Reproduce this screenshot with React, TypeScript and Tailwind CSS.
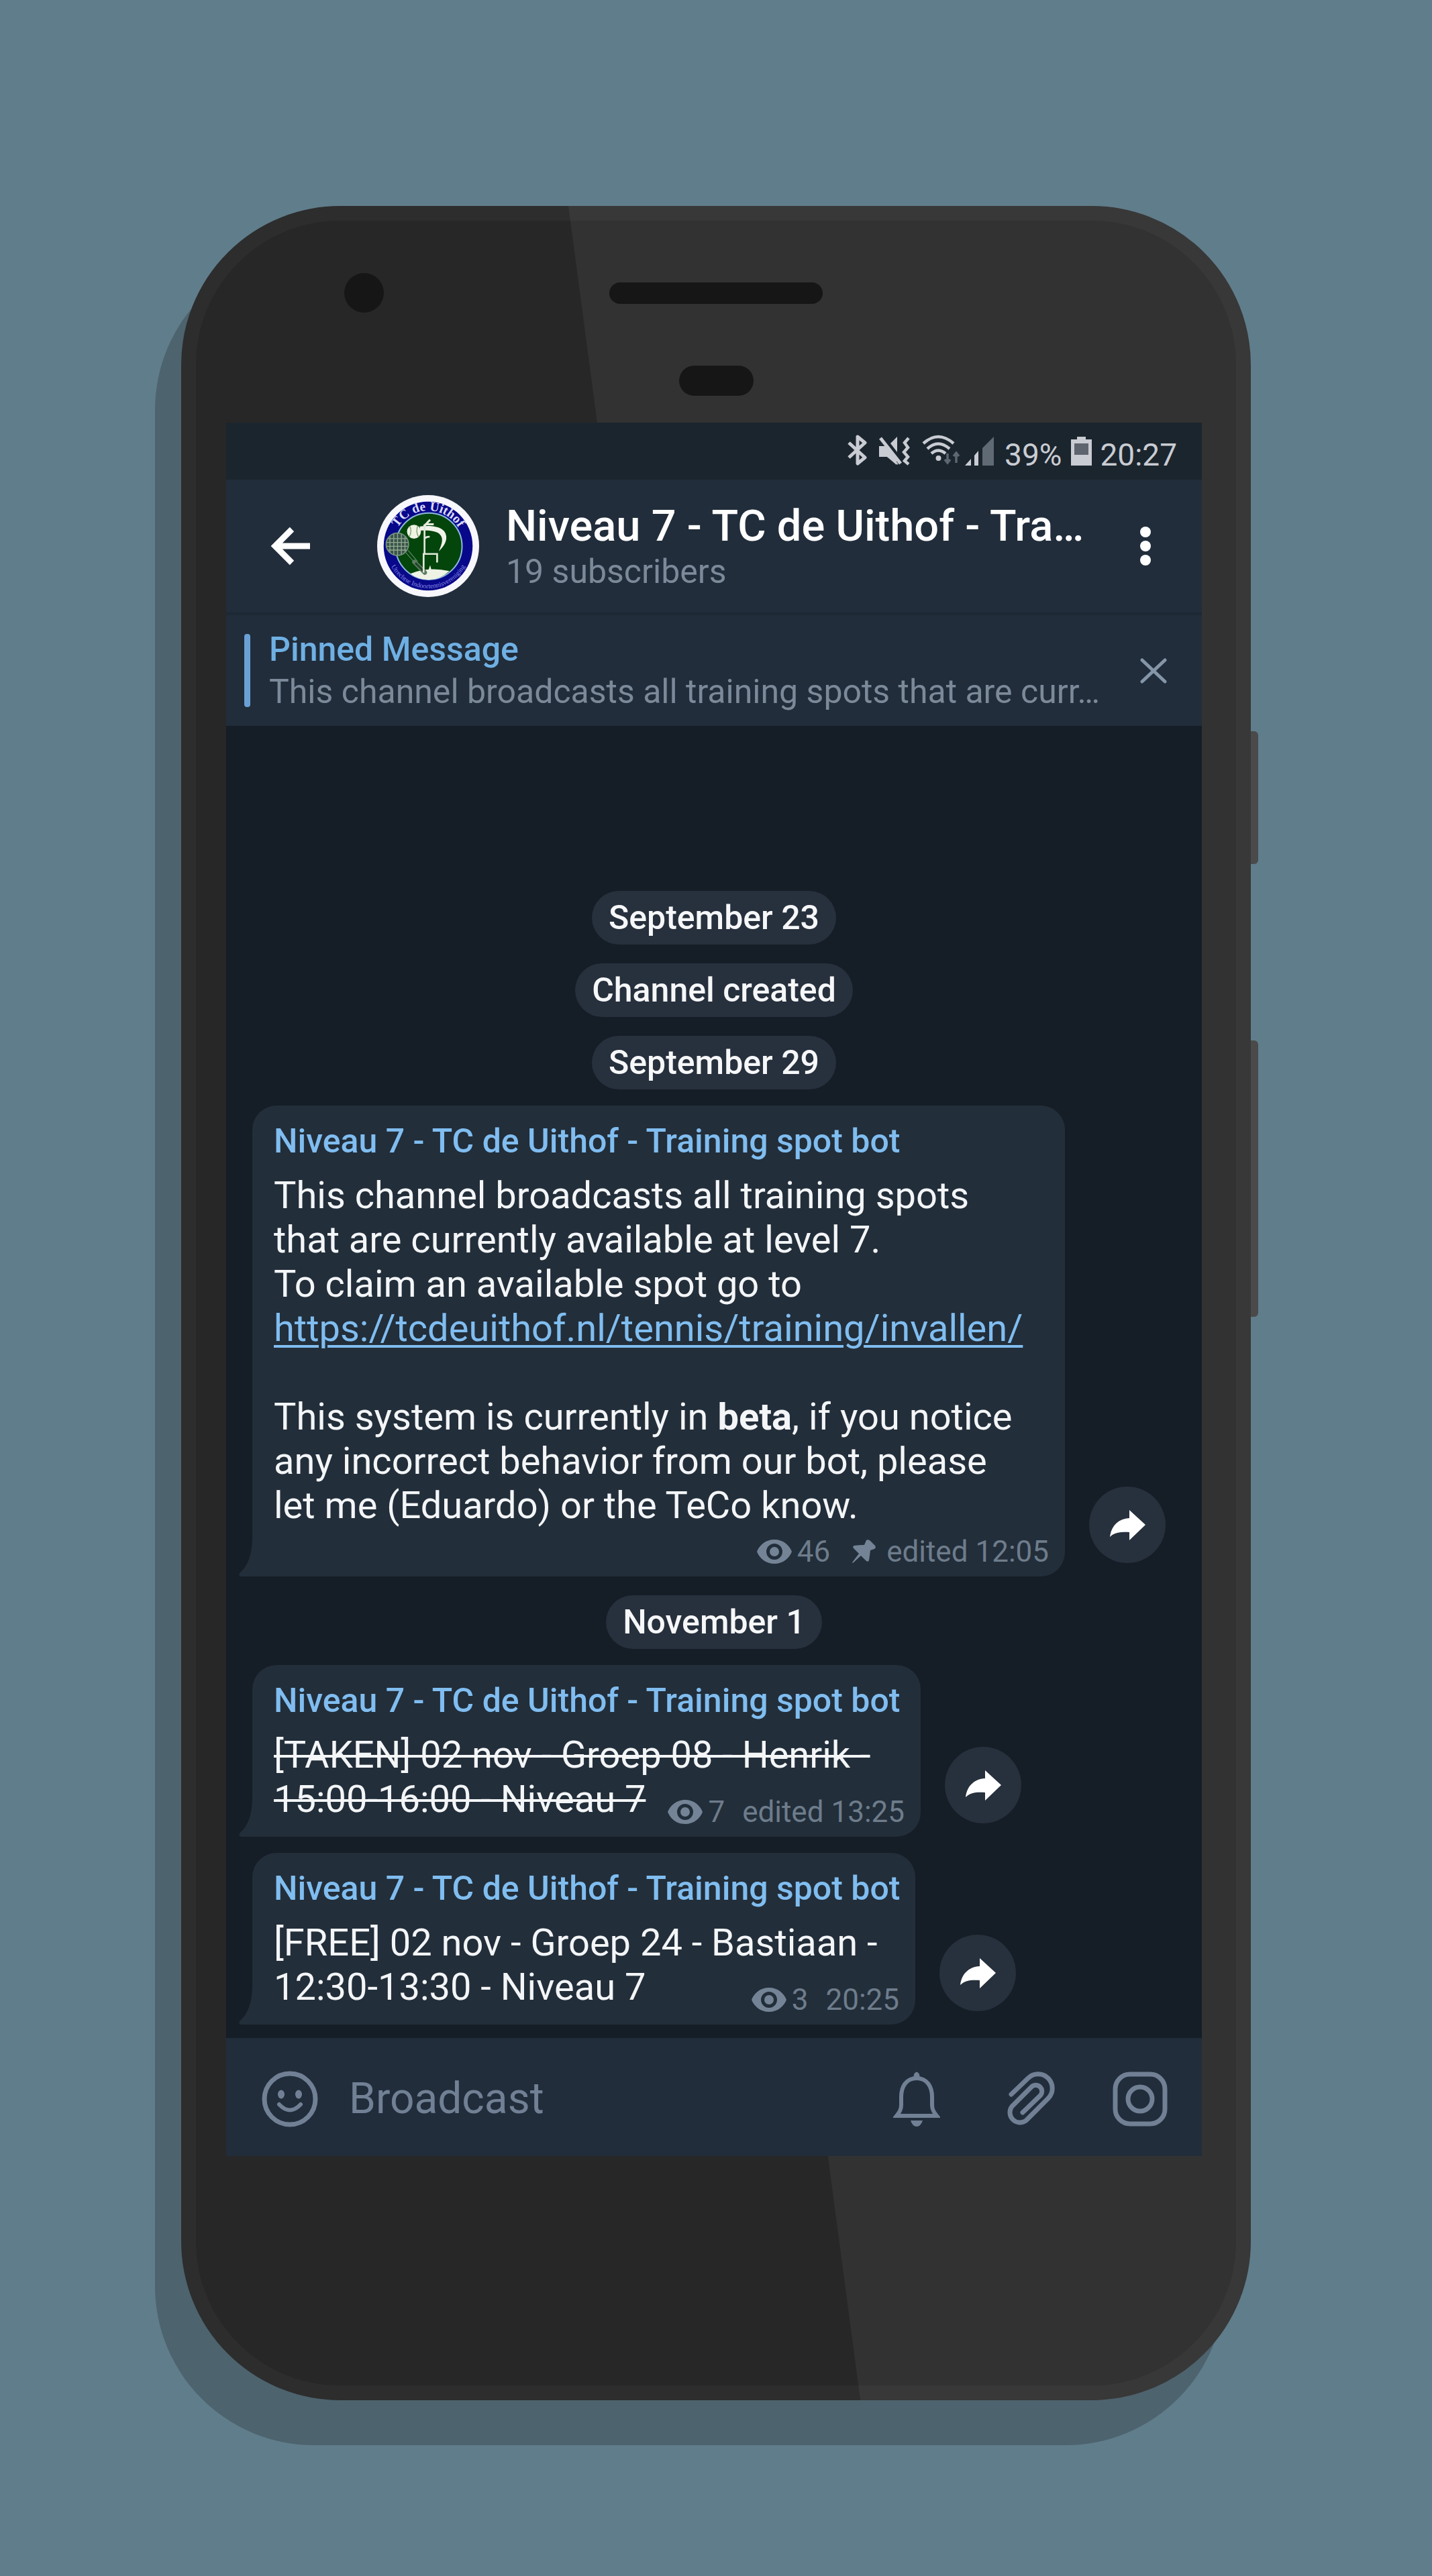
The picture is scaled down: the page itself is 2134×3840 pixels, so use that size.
import type { ReactNode } from "react";

const BOT_NAME = "Niveau 7 - TC de Uithof - Training spot bot";

function BluetoothIcon() {
  return (
    <svg aria-hidden="true" viewBox="0 0 31 46" className="h-[46px] w-[31px]" fill="none" stroke="#c9ccd2" strokeWidth="5" strokeLinejoin="round">
      <path d="M3 12 L27 34 L16 43 V3 L27 12 L3 34" />
    </svg>
  );
}

function MuteIcon() {
  return (
    <svg aria-hidden="true" viewBox="0 0 47 44" className="ml-4 h-11 w-[47px]" fill="#c9ccd2">
      <path d="M1 15 H9 L29 41 V43 L13 31 H1Z" />
      <path d="M1 15 H10 L27 36 V43 L13 31 H1Z" />
      <path d="M28 1 V24 L18 11Z" />
      <path d="M3 3 L33 41" stroke="#c9ccd2" strokeWidth="5" />
      <path d="M45 3 L39 10 L44 17 L38 24 L44 31 L39 37 L45 42" fill="none" stroke="#c9ccd2" strokeWidth="4.5" />
    </svg>
  );
}

function WifiIcon() {
  return (
    <svg aria-hidden="true" viewBox="0 0 57 46" className="ml-[18px] h-[46px] w-[57px]" fill="none" stroke="#c9ccd2" strokeWidth="4.5">
      <path d="M2 13 Q24 -7 47 13" />
      <path d="M8 21 Q24 6 41 21" />
      <path d="M14 28 Q24 19 35 28" />
      <circle cx="24.500" cy="35" r="4" fill="#c9ccd2" stroke="none" />
      <path d="M38 28 V42 M34 37 L38 42 L42 37 M51 42 V27 M47 32 L51 27 L55 32" stroke="#5d6672" strokeWidth="3.5" />
    </svg>
  );
}

function SignalIcon() {
  return (
    <svg aria-hidden="true" viewBox="0 0 43 43" className="ml-[7px] h-[43px] w-[43px]">
      <path d="M0 43 L9 33 V43Z" fill="#c9ccd2" />
      <path d="M14 43 V28 L20 21 V43Z" fill="#c9ccd2" />
      <path d="M26 43 V17 L43 0 V43Z" fill="#606a75" />
    </svg>
  );
}

function BatteryIcon() {
  return (
    <svg aria-hidden="true" viewBox="0 0 31 43" className="ml-[14px] h-[43px] w-[31px]">
      <path d="M9 0 H22 V4 H31 V43 H0 V4 H9Z" fill="#c9ccd2" />
      <path d="M5 10 H26 V27 H5Z" fill="#5f656e" />
    </svg>
  );
}

function ClubLogo() {
  return (
    <svg role="img" aria-label="TC de Uithof" viewBox="0 0 454 454" className="ml-[84px] size-[152px] shrink-0">
      <defs>
        <path id="logo-top" d="M69 227 A158 158 0 0 1 385 227" />
        <path id="logo-bottom" d="M39 227 A188 188 0 0 0 415 227" />
      </defs>
      <circle cx="227" cy="227" r="227" fill="#f7f7fc" />
      <circle cx="227" cy="227" r="198" fill="#08088a" />
      <circle cx="230" cy="228" r="148" fill="#04450c" stroke="#8db9dc" strokeWidth="6" />
      <path d="M148 350 Q225 318 322 338 Q278 378 228 377 Q182 376 148 350Z" fill="#eef3e6" />
      <circle cx="90" cy="219" r="50" fill="#38544c" stroke="#75917f" strokeWidth="5" />
      <path d="M57 184 V255 M74 173 V265 M91 170 V268 M108 174 V264 M124 186 V252 M48 194 H132 M42 211 H139 M42 228 H138 M50 245 H130" stroke="#93a88c" strokeWidth="4" />
      <path d="M126 254 L168 302 M138 246 L180 296" stroke="#6d8f6f" strokeWidth="3" />
      <path d="M166 298 L212 345" stroke="#5e7c62" strokeWidth="20" strokeLinecap="round" />
      <path d="M170 302 L210 342" stroke="#23432b" strokeWidth="9" />
      <circle cx="164" cy="163" r="31" fill="#eef3e2" />
      <path d="M146 140 Q156 162 143 186 M180 138 Q172 164 184 186" fill="none" stroke="#7f9a74" strokeWidth="4" />
      <path d="M190 140 C248 132 306 142 308 186 C309 212 294 230 275 250 C284 226 292 210 288 190 C280 160 240 156 192 158Z" fill="#f1f4ea" />
      <path d="M207 345 V262 H267 V300 M211 262 V130 M213 192 Q222 184 234 186" fill="none" stroke="#dfe8d8" strokeWidth="8" />
      <path d="M208 140 L228 118 L236 110 M214 130 H252" fill="none" stroke="#e6ecdf" strokeWidth="9" />
      <path d="M226 342 L236 312 L244 342Z" fill="#eef3e6" />
      <text fill="#dcdcfa" className="font-['Liberation_Serif',serif] text-[58px] font-bold">
        <textPath href="#logo-top" startOffset="50%" textAnchor="middle">TC de Uithof</textPath>
      </text>
      <text fill="#8686e2" className="font-['Liberation_Serif',serif] text-[30px]">
        <textPath href="#logo-bottom" startOffset="50%" textAnchor="middle">Utrechtse Indoortennisvereniging</textPath>
      </text>
    </svg>
  );
}

function EyeIcon() {
  return (
    <svg aria-hidden="true" viewBox="0 0 52 36" className="h-9 w-[52px]" fillRule="evenodd" fill="#748496">
      <path d="M26 0 C39 0 48 8 52 18 C48 28 39 36 26 36 C13 36 4 28 0 18 C4 8 13 0 26 0Z M26 6 A12 12 0 1 0 26 30 A12 12 0 1 0 26 6Z" />
      <circle cx="26" cy="18" r="7" />
    </svg>
  );
}

function PinIcon() {
  return (
    <svg aria-hidden="true" viewBox="0 0 36 36" className="ml-8 h-9 w-9" fill="#748496">
      <path d="M22 1 Q25 -1 28 2 L35 9 Q37 12 34 14 L28 16 Q27 24 26 31 Q25 34 22 32 L14 24 L2 35 L1 34 L11 21 L3 13 Q1 10 4 9 Q12 8 19 8Z" />
    </svg>
  );
}

function DatePill({ children }: { children: ReactNode }) {
  return (
    <p className="mt-7 flex h-20 items-center self-center rounded-full bg-[#27303d] px-[25px] text-[50px] leading-[60px] font-medium text-[#f6f7f8]">
      {children}
    </p>
  );
}

type MessageProps = {
  width: string;
  views: number;
  stamp: string;
  pinned?: boolean;
  metaClass: string;
  children: ReactNode;
};

function Message({ width, views, stamp, pinned, metaClass, children }: MessageProps) {
  return (
    <article className="mt-6 flex items-end pl-[39px]">
      <div className={`relative flex flex-col rounded-[36px] rounded-bl-none bg-[#222e3a] pt-[23px] pr-6 pb-3 pl-8 ${width}`}>
        <svg aria-hidden="true" viewBox="0 0 22 60" className="absolute bottom-0 -left-5 h-[60px] w-[22px]" fill="#222e3a">
          <path d="M20 0 C20 26 14 44 1 55 Q-1 59 3 60 H22 V0Z" />
        </svg>
        <h2 className="text-[50px] leading-[60px] font-medium whitespace-nowrap text-[#80bdf0]">{BOT_NAME}</h2>
        <div className="mt-[18px] text-[56px] leading-[66px] text-[#f3f5f7]">{children}</div>
        <p className={`flex items-center self-end text-[44px] leading-[50px] text-[#6e7c8b] ${metaClass}`}>
          <EyeIcon />
          <span className="ml-2">{views}</span>
          {pinned && <PinIcon />}
          <span className={pinned ? "ml-4" : "ml-[26px]"}>{stamp}</span>
        </p>
      </div>
      <button type="button" aria-label="Forward message" className="mb-5 ml-9 flex size-[114px] shrink-0 items-center justify-center rounded-full bg-[#27303d]">
        <svg aria-hidden="true" viewBox="0 0 53 45" className="h-[45px] w-[53px]" fill="#ffffff">
          <path d="M29 0 L53 22 L29 45 V33 C17 32 7 33 0 40 C2 24 12 13 29 12Z" />
        </svg>
      </button>
    </article>
  );
}

export default function App() {
  return (
    <div className="min-h-screen bg-[#607d8b] pt-[307px] pb-[262px] font-['Roboto',sans-serif]">
      <div className="relative mx-auto w-full max-w-[1594px] rounded-[237px] border-[22px] border-[#2d2d2d] bg-[#272727] shadow-[-39px_67px_0_0_#4d636e]">
        <div className="absolute -inset-[22px] rounded-[237px] bg-white/5 [clip-path:polygon(36.2%_0,100%_0,100%_100%,63.5%_100%)]" />
        <div className="absolute top-[761px] -right-[33px] h-[198px] w-[11px] rounded-r-md bg-[#4a4a4a]" />
        <div className="absolute top-[1222px] -right-[33px] h-[412px] w-[11px] rounded-r-md bg-[#4a4a4a]" />

        <div className="relative pt-[78px] pb-10">
          <div className="grid grid-cols-[1fr_auto_1fr] items-center">
            <div className="ml-[221px] size-[59px] rounded-full bg-[#161616]" />
            <div className="h-8 w-[318px] rounded-full bg-[#161616]" />
          </div>
          <div className="mx-auto mt-[79px] h-[45px] w-[111px] rounded-full bg-[#161616]" />
        </div>

        <div className="relative mr-[51px] mb-[342px] ml-[45px] flex min-h-[2584px] flex-col bg-[#151d26]">
          <div className="flex h-[85px] items-baseline justify-end bg-[#1b252e] pt-[18px] pr-[37px] text-[46px] leading-[46px] text-[#c9ccd2]">
            <BluetoothIcon />
            <MuteIcon />
            <WifiIcon />
            <SignalIcon />
            <span className="ml-4">39%</span>
            <BatteryIcon />
            <span className="ml-3">20:27</span>
          </div>

          <header className="flex h-[198px] items-center bg-[#212d3b] pr-11 pl-[50px]">
            <button type="button" aria-label="Back" className="flex h-24 w-[91px] shrink-0 items-center justify-center">
              <svg aria-hidden="true" viewBox="0 0 59 58" className="h-[58px] w-[59px]" fill="none" stroke="#ffffff" strokeWidth="9">
                <path d="M32 4 L7 29 L32 54 M8 29 H59" />
              </svg>
            </button>
            <ClubLogo />
            <div className="ml-10 min-w-0 flex-1">
              <h1 className="truncate text-[65px] leading-[76px] font-medium text-white">Niveau 7 - TC de Uithof - Tra…</h1>
              <p className="text-[50px] leading-[60px] text-[#7b8999]">19 subscribers</p>
            </div>
            <button type="button" aria-label="More options" className="flex h-24 w-20 shrink-0 flex-col items-center justify-center gap-[5px]">
              <span className="size-4 rounded-full bg-white" />
              <span className="size-4 rounded-full bg-white" />
              <span className="size-4 rounded-full bg-white" />
            </button>
          </header>

          <section aria-label="Pinned message" className="flex h-[169px] items-center border-t-4 border-[#1d2835] bg-[#212d3b] pr-[42px] pl-[27px]">
            <div className="h-[109px] w-[9px] shrink-0 rounded-sm bg-[#6aa0d6]" />
            <div className="ml-7 flex min-w-0 flex-1 flex-col gap-[3px] text-[50px] leading-[60px]">
              <h2 className="font-medium text-[#6fb0e4]">Pinned Message</h2>
              <p className="truncate text-[#7b8999]">This channel broadcasts all training spots that are curr…</p>
            </div>
            <button type="button" aria-label="Close pinned message" className="flex size-[60px] shrink-0 items-center justify-center">
              <svg aria-hidden="true" viewBox="0 0 40 38" className="h-[38px] w-10" fill="none" stroke="#8496a8" strokeWidth="5" strokeLinecap="round">
                <path d="M3 3 L37 35 M37 3 L3 35" />
              </svg>
            </button>
          </section>

          <main className="flex flex-1 flex-col justify-end pb-5">
            <DatePill>September 23</DatePill>
            <DatePill>Channel created</DatePill>
            <DatePill>September 29</DatePill>
            <Message width="w-[1211px]" views={46} stamp="edited 12:05" pinned metaClass="mt-[11px]">
              <p>
                This channel broadcasts all training spots
                <br />
                that are currently available at level 7.
                <br />
                To claim an available spot go to
                <br />
                <a href="https://tcdeuithof.nl/tennis/training/invallen/" className="text-[#80bdf0] underline decoration-4 underline-offset-[6px]">
                  https://tcdeuithof.nl/tennis/training/invallen/
                </a>
              </p>
              <p className="mt-[66px]">
                This system is currently in <strong className="font-bold">beta</strong>, if you notice
                <br />
                any incorrect behavior from our bot, please
                <br />
                let me (Eduardo) or the TeCo know.
              </p>
            </Message>
            <DatePill>November 1</DatePill>
            <Message width="w-[996px]" views={7} stamp="edited 13:25" metaClass="-mt-[39px]">
              <s className="decoration-4">
                [TAKEN] 02 nov - Groep 08 - Henrik -
                <br />
                15:00-16:00 - Niveau 7
              </s>
            </Message>
            <Message width="w-[988px]" views={3} stamp="20:25" metaClass="-mt-[39px]">
              [FREE] 02 nov - Groep 24 - Bastiaan -
              <br />
              12:30-13:30 - Niveau 7
            </Message>
          </main>

          <footer className="flex h-44 items-center bg-[#212d3b] pt-1.5 pr-[51px] pl-[53px]">
            <button type="button" aria-label="Emoji" className="shrink-0">
              <svg aria-hidden="true" viewBox="0 0 84 84" className="size-[84px]" fill="none" stroke="#718094" strokeWidth="7">
                <circle cx="42" cy="42" r="38" />
                <path d="M26 50 Q42 67 58 50" strokeLinecap="round" strokeWidth="6" />
                <ellipse cx="29" cy="35" rx="5" ry="6.500" fill="#718094" stroke="none" />
                <ellipse cx="55" cy="35" rx="5" ry="6.500" fill="#718094" stroke="none" />
              </svg>
            </button>
            <input
              type="text"
              aria-label="Broadcast"
              placeholder="Broadcast"
              className="ml-[46px] min-w-0 flex-1 bg-transparent text-[64px] leading-[76px] text-white outline-none placeholder:text-[#718094] placeholder:opacity-100"
            />
            <button type="button" aria-label="Notifications" className="shrink-0">
              <svg aria-hidden="true" viewBox="0 0 70 82" className="h-[82px] w-[70px]" fill="none" stroke="#718094" strokeWidth="6">
                <path d="M35 10 C19 10 12 23 12 38 V50 C12 57 9 61 5 66 H65 C61 61 58 57 58 50 V38 C58 23 51 10 35 10Z" />
                <path d="M30 11 L31 4 Q35 -3 39 4 L40 11Z M26 73 H44 Q41 82 35 82 Q29 82 26 73Z" fill="#718094" stroke="none" />
              </svg>
            </button>
            <button type="button" aria-label="Attach file" className="ml-[99px] shrink-0">
              <svg aria-hidden="true" viewBox="0 0 73 82" className="h-[82px] w-[73px]" fill="none" stroke="#718094" strokeWidth="7" strokeLinecap="round">
                <path d="M7 34 L32 10 A21 21 0 0 1 62 40 L29 73 A15 15 0 0 1 8 52 L37 23 A9 9 0 0 1 50 36 L24 61" />
              </svg>
            </button>
            <button type="button" aria-label="Camera" className="ml-[85px] shrink-0">
              <svg aria-hidden="true" viewBox="0 0 82 82" className="size-[82px]" fill="none" stroke="#718094" strokeWidth="7">
                <rect x="4" y="4" width="74" height="74" rx="22" />
                <circle cx="41" cy="41" r="18" />
              </svg>
            </button>
          </footer>
        </div>
      </div>
    </div>
  );
}
